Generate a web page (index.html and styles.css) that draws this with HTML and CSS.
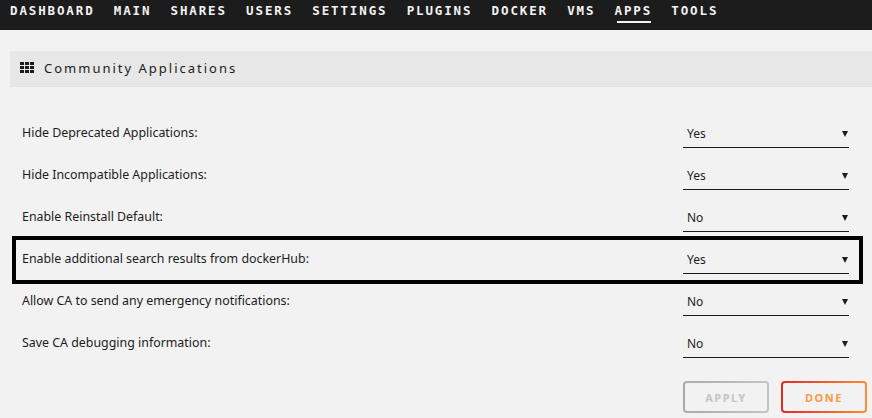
FILE: index.html
```html
<!DOCTYPE html>
<html lang="en">
<head>
    <meta charset="UTF-8">
    <title>Community Applications</title>
    <link rel="stylesheet" href="styles.css">
</head>
<body>
    <nav class="menu">
        <a href="#">DASHBOARD</a>
        <a href="#">MAIN</a>
        <a href="#">SHARES</a>
        <a href="#">USERS</a>
        <a href="#">SETTINGS</a>
        <a href="#">PLUGINS</a>
        <a href="#">DOCKER</a>
        <a href="#">VMS</a>
        <a href="#" class="active">APPS</a>
        <a href="#">TOOLS</a>
    </nav>

    <main>
        <div class="title-bar">
            <svg class="grid-icon" width="14" height="11" viewBox="0 0 14 11">
                <path d="M0 0h4v3H0zM5 0h4v3H5zM10 0h4v3h-4zM0 4h4v3H0zM5 4h4v3H5zM10 4h4v3h-4zM0 8h4v3H0zM5 8h4v3H5zM10 8h4v3h-4z"/>
            </svg>
            <span>Community Applications</span>
        </div>

        <div class="settings">
            <div class="row">
                <span class="label">Hide Deprecated Applications:</span>
                <div class="select">Yes<i class="arrow"></i></div>
            </div>
            <div class="row">
                <span class="label">Hide Incompatible Applications:</span>
                <div class="select">Yes<i class="arrow"></i></div>
            </div>
            <div class="row">
                <span class="label">Enable Reinstall Default:</span>
                <div class="select">No<i class="arrow"></i></div>
            </div>
            <div class="row highlighted">
                <span class="label">Enable additional search results from dockerHub:</span>
                <div class="select">Yes<i class="arrow"></i></div>
            </div>
            <div class="row">
                <span class="label">Allow CA to send any emergency notifications:</span>
                <div class="select">No<i class="arrow"></i></div>
            </div>
            <div class="row">
                <span class="label">Save CA debugging information:</span>
                <div class="select">No<i class="arrow"></i></div>
            </div>
        </div>

        <div class="actions">
            <button class="btn-apply">APPLY</button>
            <button class="btn-done">DONE</button>
        </div>
    </main>
</body>
</html>
```

FILE: styles.css
```css
* {
    margin: 0;
    padding: 0;
    box-sizing: border-box;
}

html, body {
    height: 418px;
    overflow: hidden;
}

body {
    background: #f2f2f2;
    color: #1c1c1c;
    font-family: 'Noto Sans', sans-serif;
    font-size: 12px;
}

.menu {
    display: flex;
    gap: 19.2px;
    height: 30px;
    padding-left: 10px;
    background: #1c1c1c;
}

.menu a {
    position: relative;
    height: 23px;
    line-height: 21px;
    color: #f2f2f2;
    font-family: 'DejaVu Sans Mono', monospace;
    font-size: 12.5px;
    font-weight: 700;
    letter-spacing: 1.87px;
    text-decoration: none;
}

.menu a.active::after {
    content: "";
    position: absolute;
    left: 2px;
    right: 1px;
    bottom: 0;
    height: 2px;
    background: #f2f2f2;
}

main {
    padding: 21px 0 0 10px;
}

.title-bar {
    display: flex;
    align-items: center;
    gap: 10px;
    height: 36px;
    padding: 0 0 2px 10px;
    background: #e7e7e7;
    border-bottom: 1px solid #e2e2e2;
    font-size: 13px;
    letter-spacing: 2px;
}

.grid-icon {
    fill: #1c1c1c;
}

.settings {
    padding: 24px 23px 0 12px;
}

.row {
    position: relative;
    display: flex;
    justify-content: space-between;
    height: 42px;
}

.label {
    font-size: 12.4px;
    line-height: 44px;
}

.select {
    position: relative;
    width: 166px;
    height: 37px;
    padding: 15px 0 0 4px;
    border-bottom: 1px solid #1c1c1c;
    line-height: 16px;
}

.arrow {
    position: absolute;
    top: 20px;
    right: 1px;
    border-left: 3px solid transparent;
    border-right: 3px solid transparent;
    border-top: 6px solid #1c1c1c;
}

.highlighted::after {
    content: "";
    box-sizing: border-box;
    position: absolute;
    top: -1px;
    left: -10px;
    right: -14px;
    height: 48px;
    border: 4px solid #000;
}

.actions {
    display: flex;
    justify-content: flex-end;
    gap: 12px;
    padding: 18px 5px 0 0;
}

.actions button {
    width: 86px;
    height: 32px;
    font-family: inherit;
    font-size: 11px;
    font-weight: 700;
    letter-spacing: 1.5px;
    border: 2px solid transparent;
    border-radius: 4px;
}

.btn-apply {
    color: #c4c4c4;
    background: linear-gradient(#f2f2f2, #f2f2f2) padding-box, linear-gradient(90deg, #aaa, #c4c4c4) border-box;
}

.btn-done {
    color: #f79b45;
    background: linear-gradient(#f2f2f2, #f2f2f2) padding-box, linear-gradient(90deg, #e22828, #ff8c2f) border-box;
}
```
